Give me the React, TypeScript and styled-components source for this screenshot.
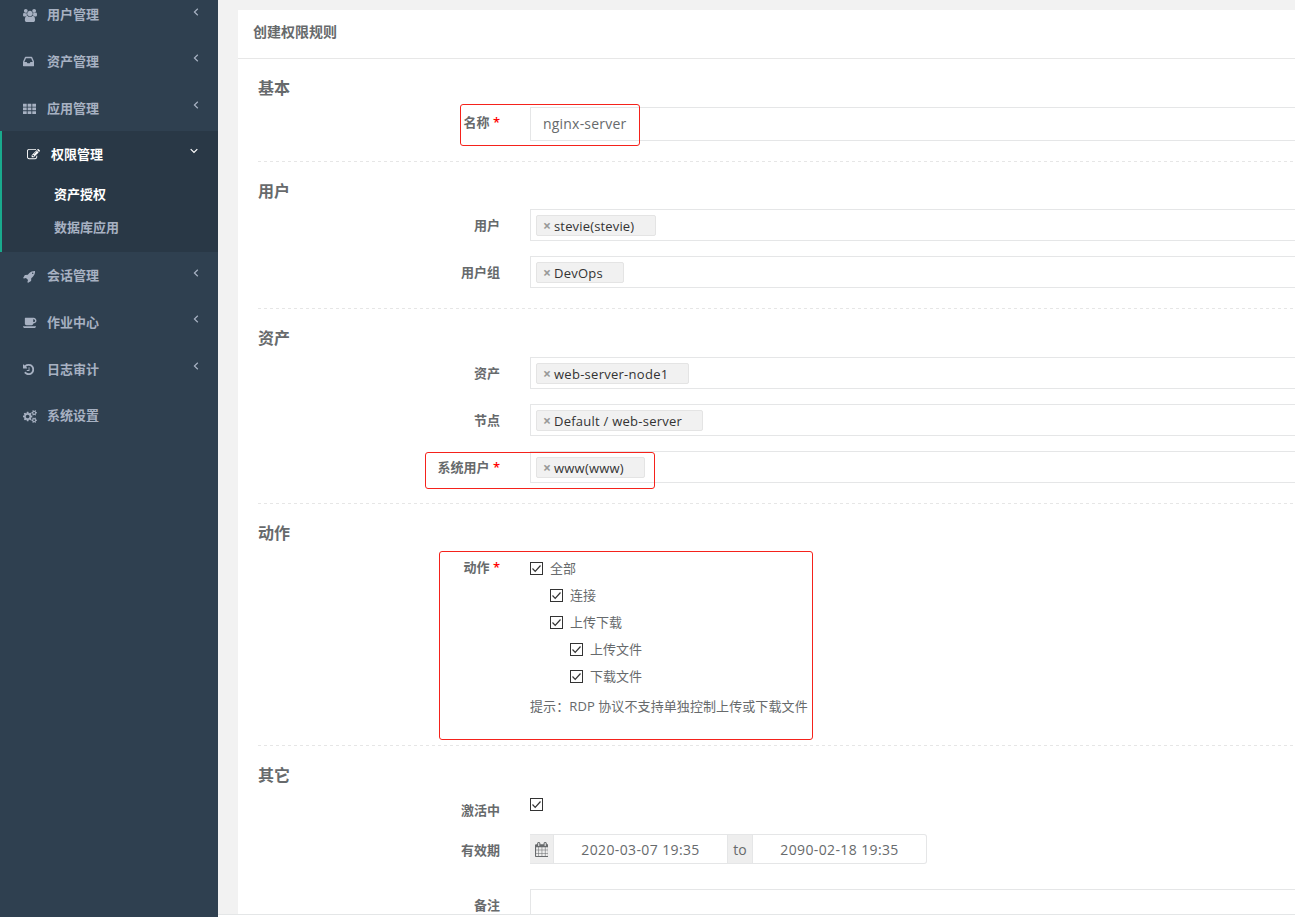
import React from "react";
import styled, { createGlobalStyle, css } from "styled-components";

const GlobalStyle = createGlobalStyle`
  * { box-sizing: border-box; }
  body {
    margin: 0;
    overflow: hidden;
    background: #f2f2f2;
    color: #676a6c;
    font-family: "Open Sans", "Noto Sans CJK SC", sans-serif;
    font-size: 13px;
  }
`;

const gear =
  "v140q0 16-149 31-12 27-30 52 51 113 51 138 0 4-4 7-122 71-124 71-8 0-46-47t-52-68q-20 2-30 2t-30-2q-14 21-52 68t-46 47q-2 0-124-71-4-3-4-7 0-25 51-138-18-25-30-52-149-15-149-31v-140q0-16 149-31 13-29 30-52-51-113-51-138 0-4 4-7 4-2 35-20t59-34 30-16q8 0 46 46.5t52 67.5q20-2 30-2t30 2q51-71 92-112l6-2q4 0 124 70 4 3 4 7 0 25-51 138 17 23 30 52 149 15 149 31z";

const glyphs = {
  users: {
    width: 1920,
    d: "M593 896q-162 5-265 128h-134q-82 0-138-40.5t-56-118.5q0-353 124-353 6 0 43.5 21t97.5 42.5 119 21.5q67 0 133-23-5 37-5 66 0 159 93 294zm1071 637q0 120-73 189.5t-194 69.5h-874q-121 0-194-69.5t-73-189.5q0-53 3.5-103.5t14-109 26.5-108.5 43-97.5 62-81 85.5-53.5 111.5-20q10 0 43 21.5t73 48 107 48 135 21.5 135-21.5 107-48 73-48 43-21.5q61 0 111.5 20t85.5 53.5 62 81 43 97.5 26.5 108.5 14 109 3.5 103.5zm-1024-1277q0 106-75 181t-181 75-181-75-75-181 75-181 181-75 181 75 75 181zm704 384q0 159-112.5 271.5t-271.5 112.5-271.5-112.5-112.5-271.5 112.5-271.5 271.5-112.5 271.5 112.5 112.5 271.5zm576 225q0 78-56 118.5t-138 40.5h-134q-103-123-265-128 93-135 93-294 0-29-5-66 66 23 133 23 59 0 119-21.5t97.5-42.5 43.5-21q124 0 124 353zm-128-609q0 106-75 181t-181 75-181-75-75-181 75-181 181-75 181 75 75 181z",
  },
  inbox: {
    width: 1536,
    d: "M1023 960h316q-1-3-2.5-8t-2.5-8l-212-496h-708l-212 496q-1 2-2.5 8t-2.5 8h316l95 192h320zm513 30v482q0 26-19 45t-45 19h-1408q-26 0-45-19t-19-45v-482q0-62 25-123l238-552q10-25 36.5-42t52.5-17h832q26 0 52.5 17t36.5 42l238 552q25 61 25 123z",
  },
  grid: {
    width: 1792,
    d: "M0 256h512v384h-512zM640 256h512v384h-512zM1280 256h512v384h-512zM0 768h512v384h-512zM640 768h512v384h-512zM1280 768h512v384h-512zM0 1280h512v384h-512zM640 1280h512v384h-512zM1280 1280h512v384h-512z",
  },
  edit: {
    width: 1792,
    d: "M888 1184l116-116-152-152-116 116v56h96v96h56zm440-720q-16-16-33 1l-350 350q-17 17-1 33t33-1l350-350q17-17 1-33zm80 594v190q0 119-84.5 203.5t-203.5 84.5h-832q-119 0-203.5-84.5t-84.5-203.5v-832q0-119 84.5-203.5t203.5-84.5h832q63 0 117 25 15 7 18 23 3 17-9 29l-49 49q-14 14-32 8-23-6-45-6h-832q-66 0-113 47t-47 113v832q0 66 47 113t113 47h832q66 0 113-47t47-113v-126q0-13 9-22l64-64q15-15 35-7t20 29zm-96-738l288 288-672 672h-288v-288zm444 132l-92 92-288-288 92-92q28-28 68-28t68 28l152 152q28 28 28 68t-28 68z",
  },
  rocket: {
    width: 1664,
    d: "M1440 448q0-40-28-68t-68-28-68 28-28 68 28 68 68 28 68-28 28-68zm224-288q0 249-75.5 430.5t-253.5 360.5q-81 80-195 176l-20 379q-2 16-16 26l-384 224q-7 4-16 4-12 0-23-9l-64-64q-13-14-8-32l85-276-281-281-276 85q-3 1-9 1-14 0-23-9l-64-64q-17-19-5-39l224-384q10-14 26-16l379-20q96-114 176-195 188-187 358-258t431-71q14 0 24 9.5t10 22.5z",
  },
  coffee: {
    width: 1920,
    d: "M1664 640q0-80-56-136t-136-56h-64v384h64q80 0 136-56t56-136zm-1664 768h1792q0 106-75 181t-181 75h-1280q-106 0-181-75t-75-181zm1856-768q0 159-112.5 271.5t-271.5 112.5h-64v32q0 92-66 158t-158 66h-704q-92 0-158-66t-66-158v-736q0-26 19-45t45-19h1152q159 0 271.5 112.5t112.5 271.5z",
  },
  history: {
    width: 1536,
    d: "M1536 896q0 156-61 298t-164 245-245 164-298 61q-172 0-327-72.5t-264-204.5q-7-10-6.5-22.5t8.5-20.5l137-138q10-9 25-9 16 2 23 12 73 95 179 147t225 52q104 0 198.5-40.5t163.5-109.5 109.5-163.5 40.5-198.5-40.5-198.5-109.5-163.5-163.5-109.5-198.5-40.5q-98 0-188 35.5t-160 101.5l137 138q31 30 14 69-17 40-59 40h-448q-26 0-45-19t-19-45v-448q0-42 40-59 39-17 69 14l130 129q107-101 244.5-156.5t284.5-55.5q156 0 298 61t245 164 164 245 61 298zm-640-288v448q0 14-9 23t-23 9h-320q-14 0-23-9t-9-23v-64q0-14 9-23t23-9h224v-352q0-14 9-23t23-9h64q14 0 23 9t9 23z",
  },
  cogs: {
    width: 1920,
    d:
      "M896 896q0-106-75-181t-181-75-181 75-75 181 75 181 181 75 181-75 75-181zm768 512q0-52-38-90t-90-38-90 38-38 90q0 53 37.5 90.5t90.5 37.5 90.5-37.5 37.5-90.5zm0-1024q0-52-38-90t-90-38-90 38-38 90q0 53 37.5 90.5t90.5 37.5 90.5-37.5 37.5-90.5zm-384 421v185q0 10-7 19.5t-16 10.5l-155 24q-11 35-32 76 34 48 90 115 7 11 7 20 0 12-7 19-23 30-82.5 89.5t-78.5 59.5q-11 0-21-7l-115-90q-37 19-77 31-11 108-23 155-7 24-30 24h-186q-11 0-20-7.5t-10-17.5l-23-153q-34-10-75-31l-118 89q-7 7-20 7-11 0-21-8-144-133-144-160 0-9 7-19 10-14 41-53t47-61q-23-44-35-82l-152-24q-10-1-17-9.5t-7-19.5v-185q0-10 7-19.5t16-10.5l155-24q11-35 32-76-34-48-90-115-7-11-7-20 0-12 7-20 22-30 82-89t79-59q11 0 21 7l115 90q34-18 77-32 11-108 23-154 7-24 30-24h186q11 0 20 7.5t10 17.5l23 153q34 10 75 31l118-89q8-7 20-7 11 0 21 8 144 133 144 160 0 8-7 19-12 16-42 54t-45 60q23 48 34 82l152 23q10 2 17 10.5t7 19.5z" +
      "M1920 1338" + gear + "M1920 314" + gear,
  },
  calendar: {
    width: 1664,
    d: "M128 1664h288v-288h-288v288zm352 0h320v-288h-320v288zm-352-352h288v-320h-288v320zm352 0h320v-320h-320v320zm-352-384h288v-288h-288v288zm736 736h320v-288h-320v288zm-384-736h320v-288h-320v288zm768 736h288v-288h-288v288zm-384-352h320v-320h-320v320zm-352-864v-288q0-13-9.5-22.5t-22.5-9.5h-64q-13 0-22.5 9.5t-9.5 22.5v288q0 13 9.5 22.5t22.5 9.5h64q13 0 22.5-9.5t9.5-22.5zm736 864h288v-320h-288v320zm-384-384h320v-288h-320v288zm384 0h288v-288h-288v288zm32-480v-288q0-13-9.5-22.5t-22.5-9.5h-64q-13 0-22.5 9.5t-9.5 22.5v288q0 13 9.5 22.5t22.5 9.5h64q13 0 22.5-9.5t9.5-22.5zm384-64v1280q0 52-38 90t-90 38h-1408q-52 0-90-38t-38-90v-1280q0-52 38-90t90-38h128v-96q0-66 47-113t113-47h64q66 0 113 47t47 113v96h384v-96q0-66 47-113t113-47h64q66 0 113 47t47 113v96h128q52 0 90 38t38 90z",
  },
};

type GlyphName = keyof typeof glyphs;

function Glyph({ name, size = 13 }: { name: GlyphName; size?: number }) {
  const g = glyphs[name];
  return (
    <svg width={(g.width / 1792) * size} height={size} viewBox={`0 0 ${g.width} 1792`} fill="currentColor">
      <path d={g.d} />
    </svg>
  );
}

const Page = styled.div`
  display: flex;
  height: 917px;
  overflow: hidden;
`;

const Sidebar = styled.nav`
  flex: none;
  width: 218px;
  margin-top: -9px;
  height: 926px;
  background: #2f4050;
  color: #a7b1c2;
  font-weight: 600;
`;

const NavGroup = styled.div<{ $active?: boolean }>`
  ${(p) =>
    p.$active &&
    css`
      height: 121px;
      border-left: 2px solid #19aa8d;
      background: #293846;
      color: #fff;
    `}
`;

const NavItem = styled.div<{ $active?: boolean }>`
  display: flex;
  align-items: center;
  height: 46.66px;
  padding: 0 ${(p) => (p.$active ? 20 : 19)}px 0 ${(p) => (p.$active ? 25 : 23)}px;
`;

const NavIcon = styled.span<{ $active?: boolean }>`
  display: flex;
  width: 24px;
  margin-top: ${(p) => (p.$active ? 0 : 2)}px;
`;

const NavText = styled.span`
  flex: 1;
  line-height: 18px;
`;

const Arrow = styled.svg<{ $lift?: number }>`
  margin-bottom: ${(p) => p.$lift ?? 5}px;
  fill: none;
  stroke: currentColor;
  stroke-width: 1.2;
`;

const SubItem = styled.div<{ $current?: boolean }>`
  height: 33px;
  padding-left: 52px;
  line-height: 32px;
  color: ${(p) => (p.$current ? "#fff" : "#a7b1c2")};
`;

const Main = styled.main`
  flex: 1;
  min-width: 0;
  display: flex;
  flex-direction: column;
`;

const Content = styled.div`
  flex: 1;
  min-height: 0;
  overflow: hidden;
  padding: 10px 0 0 20px;
`;

const Footer = styled.footer`
  flex: none;
  height: 3px;
  border-top: 1px solid #e4e6e7;
  background: #fff;
`;

const Panel = styled.section`
  position: relative;
  background: #fff;
  height: 960px;
`;

const PanelHeader = styled.header`
  height: 49px;
  padding: 0 15px;
  border-bottom: 1px solid #e7e7e7;
  font-size: 14px;
  font-weight: 600;
  line-height: 44px;
`;

const Form = styled.div`
  padding-left: 20px;
`;

const Heading = styled.h3<{ $height?: number }>`
  margin: 0;
  height: ${(p) => p.$height ?? 48}px;
  font-size: 16px;
  font-weight: 600;
  line-height: 58px;
`;

const Fields = styled.div`
  display: flex;
  flex-direction: column;
  gap: 15px;
  padding-bottom: 20px;
`;

const Divider = styled.div`
  height: 1px;
  background: repeating-linear-gradient(to right, #e6e6e6 0 3px, transparent 3px 6px);
`;

const Row = styled.div<{ $height?: number }>`
  display: grid;
  grid-template-columns: 242px minmax(0, 1fr);
  column-gap: 30px;
  height: ${(p) => p.$height ?? 32}px;
`;

const Label = styled.label<{ $line?: number }>`
  text-align: right;
  font-weight: 600;
  line-height: ${(p) => p.$line ?? 32}px;
  white-space: pre;
`;

const Star = styled.span`
  color: #f00;
`;

const Input = styled.div`
  height: 34px;
  padding: 0 12px;
  border: 1px solid #e5e6e7;
  border-right: 0;
  font-size: 14px;
  line-height: 32px;
`;

const Select = styled.div`
  height: 32px;
  padding: 5px;
  border: 1px solid #e5e6e7;
  border-right: 0;
`;

const Tag = styled.span<{ $width: number }>`
  display: flex;
  align-items: center;
  width: ${(p) => p.$width}px;
  height: 21px;
  padding-left: 6px;
  border: 1px solid #e4e4e4;
  border-radius: 2px;
  background: #f1f1f1;
  color: #333;
  font-size: 13px;
  white-space: nowrap;
`;

const Remove = styled.span`
  width: 11px;
  color: #999;
  font-size: 14px;
  font-weight: 700;
`;

const CheckList = styled.div`
  padding-top: 3px;
`;

const CheckRow = styled.div<{ $level: number }>`
  display: flex;
  align-items: center;
  gap: 7px;
  height: 27px;
  padding-left: ${(p) => p.$level * 20}px;
`;

const CheckText = styled.span`
  padding-bottom: 2px;
`;

const Box = styled.svg`
  flex: none;
  fill: #fff;
  stroke: #333;
`;

const Hint = styled.div`
  line-height: 33px;
  letter-spacing: 0.09px;
  white-space: nowrap;
`;

const ActiveCheck = styled.div`
  padding-top: 3px;
`;

const DateRange = styled.div`
  display: flex;
  width: 397px;
  height: 30px;
  border: 1px solid #e5e6e7;
  border-left: 0;
  border-radius: 0 3px 3px 0;
  font-size: 14px;
`;

const Addon = styled.span<{ $width: number }>`
  display: flex;
  flex: none;
  align-items: center;
  justify-content: center;
  width: ${(p) => p.$width}px;
  background: #eee;
  border-right: 1px solid #e5e6e7;
`;

const DateText = styled.span`
  flex: 1;
  text-align: center;
  line-height: 29px;
  letter-spacing: 0.38px;
  border-right: 1px solid #e5e6e7;
  &:last-child {
    border-right: 0;
  }
`;

const TextArea = styled.div`
  height: 60px;
  border: 1px solid #e5e6e7;
  border-right: 0;
`;

const Highlight = styled.div<{ $x: number; $y: number; $w: number; $h: number }>`
  position: absolute;
  left: ${(p) => p.$x}px;
  top: ${(p) => p.$y}px;
  width: ${(p) => p.$w}px;
  height: ${(p) => p.$h}px;
  border: 1px solid #f5221b;
  border-radius: 3px;
`;

const Spaced = styled.span<{ $spacing: number }>`
  letter-spacing: ${(p) => p.$spacing}px;
`;

function CheckBox() {
  return (
    <Box width="13" height="13" viewBox="0 0 13 13">
      <rect x="0.5" y="0.5" width="12" height="12" />
      <path d="M2.5 6.5l2.7 2.8 5.3-5.8" fill="none" strokeWidth="1.2" />
    </Box>
  );
}

function MenuItem({ icon, text, arrow = "left", active }: { icon: GlyphName; text: string; arrow?: "left" | "down" | "none"; active?: boolean }) {
  return (
    <NavItem $active={active}>
      <NavIcon $active={active}>
        <Glyph name={icon} />
      </NavIcon>
      <NavText>{text}</NavText>
      {arrow === "left" && (
        <Arrow width="6" height="8" viewBox="0 0 6 8">
          <path d="M4.8 0.7L1.4 4l3.4 3.3" />
        </Arrow>
      )}
      {arrow === "down" && (
        <Arrow $lift={7} width="8" height="6" viewBox="0 0 8 6">
          <path d="M0.7 1.2L4 4.5l3.3-3.3" />
        </Arrow>
      )}
    </NavItem>
  );
}

function TagField({ label, required, value, width, spacing = 0, line }: { label: string; required?: boolean; value: string; width: number; spacing?: number; line?: number }) {
  return (
    <Row>
      <Label $line={line}>
        {label}
        {required && <Star> *</Star>}
      </Label>
      <Select>
        <Tag $width={width}>
          <Remove>×</Remove>
          <Spaced $spacing={spacing}>{value}</Spaced>
        </Tag>
      </Select>
    </Row>
  );
}

const actions = [
  { text: "全部", level: 0 },
  { text: "连接", level: 1 },
  { text: "上传下载", level: 1 },
  { text: "上传文件", level: 2 },
  { text: "下载文件", level: 2 },
];

export default function App() {
  return (
    <>
      <GlobalStyle />
      <Page>
        <Sidebar>
          <NavGroup>
            <MenuItem icon="users" text="用户管理" />
            <MenuItem icon="inbox" text="资产管理" />
            <MenuItem icon="grid" text="应用管理" />
          </NavGroup>
          <NavGroup $active>
            <MenuItem icon="edit" text="权限管理" arrow="down" active />
            <SubItem $current>资产授权</SubItem>
            <SubItem>数据库应用</SubItem>
          </NavGroup>
          <NavGroup>
            <MenuItem icon="rocket" text="会话管理" />
            <MenuItem icon="coffee" text="作业中心" />
            <MenuItem icon="history" text="日志审计" />
            <MenuItem icon="cogs" text="系统设置" arrow="none" />
          </NavGroup>
        </Sidebar>
        <Main>
          <Content>
            <Panel>
              <PanelHeader>创建权限规则</PanelHeader>
              <Form>
                <Heading>基本</Heading>
                <Fields>
                  <Row $height={34}>
                    <Label $line={30}>
                      名称<Star> *</Star>
                    </Label>
                    <Input>
                      <Spaced $spacing={0.2}>nginx-server</Spaced>
                    </Input>
                  </Row>
                </Fields>
                <Divider />
                <Heading $height={47}>用户</Heading>
                <Fields>
                  <TagField label="用户" value="stevie(stevie)" width={120} spacing={0.16} />
                  <TagField label="用户组" value="DevOps" width={88} spacing={0.25} />
                </Fields>
                <Divider />
                <Heading>资产</Heading>
                <Fields>
                  <TagField label="资产" value="web-server-node1" width={153} spacing={0.27} />
                  <TagField label="节点" value="Default / web-server" width={167} spacing={0.25} />
                  <TagField label="系统用户" required value="www(www)" width={109} spacing={0.22} line={33} />
                </Fields>
                <Divider />
                <Heading>动作</Heading>
                <Row $height={193}>
                  <Label $line={31}>
                    动作<Star> *</Star>
                  </Label>
                  <CheckList>
                    {actions.map((a) => (
                      <CheckRow key={a.text} $level={a.level}>
                        <CheckBox />
                        <CheckText>{a.text}</CheckText>
                      </CheckRow>
                    ))}
                    <Hint>提示：RDP 协议不支持单独控制上传或下载文件</Hint>
                  </CheckList>
                </Row>
                <Divider />
                <Heading>其它</Heading>
                <Row $height={40}>
                  <Label>激活中</Label>
                  <ActiveCheck>
                    <CheckBox />
                  </ActiveCheck>
                </Row>
                <Row $height={55}>
                  <Label>有效期</Label>
                  <DateRange>
                    <Addon $width={24}>
                      <Glyph name="calendar" size={15} />
                    </Addon>
                    <DateText>2020-03-07 19:35</DateText>
                    <Addon $width={25}>to</Addon>
                    <DateText>2090-02-18 19:35</DateText>
                  </DateRange>
                </Row>
                <Row $height={60}>
                  <Label>备注</Label>
                  <TextArea />
                </Row>
              </Form>
              <Highlight $x={222} $y={94} $w={180} $h={42} />
              <Highlight $x={187} $y={442} $w={230} $h={37} />
              <Highlight $x={201} $y={541} $w={374} $h={189} />
            </Panel>
          </Content>
          <Footer />
        </Main>
      </Page>
    </>
  );
}
